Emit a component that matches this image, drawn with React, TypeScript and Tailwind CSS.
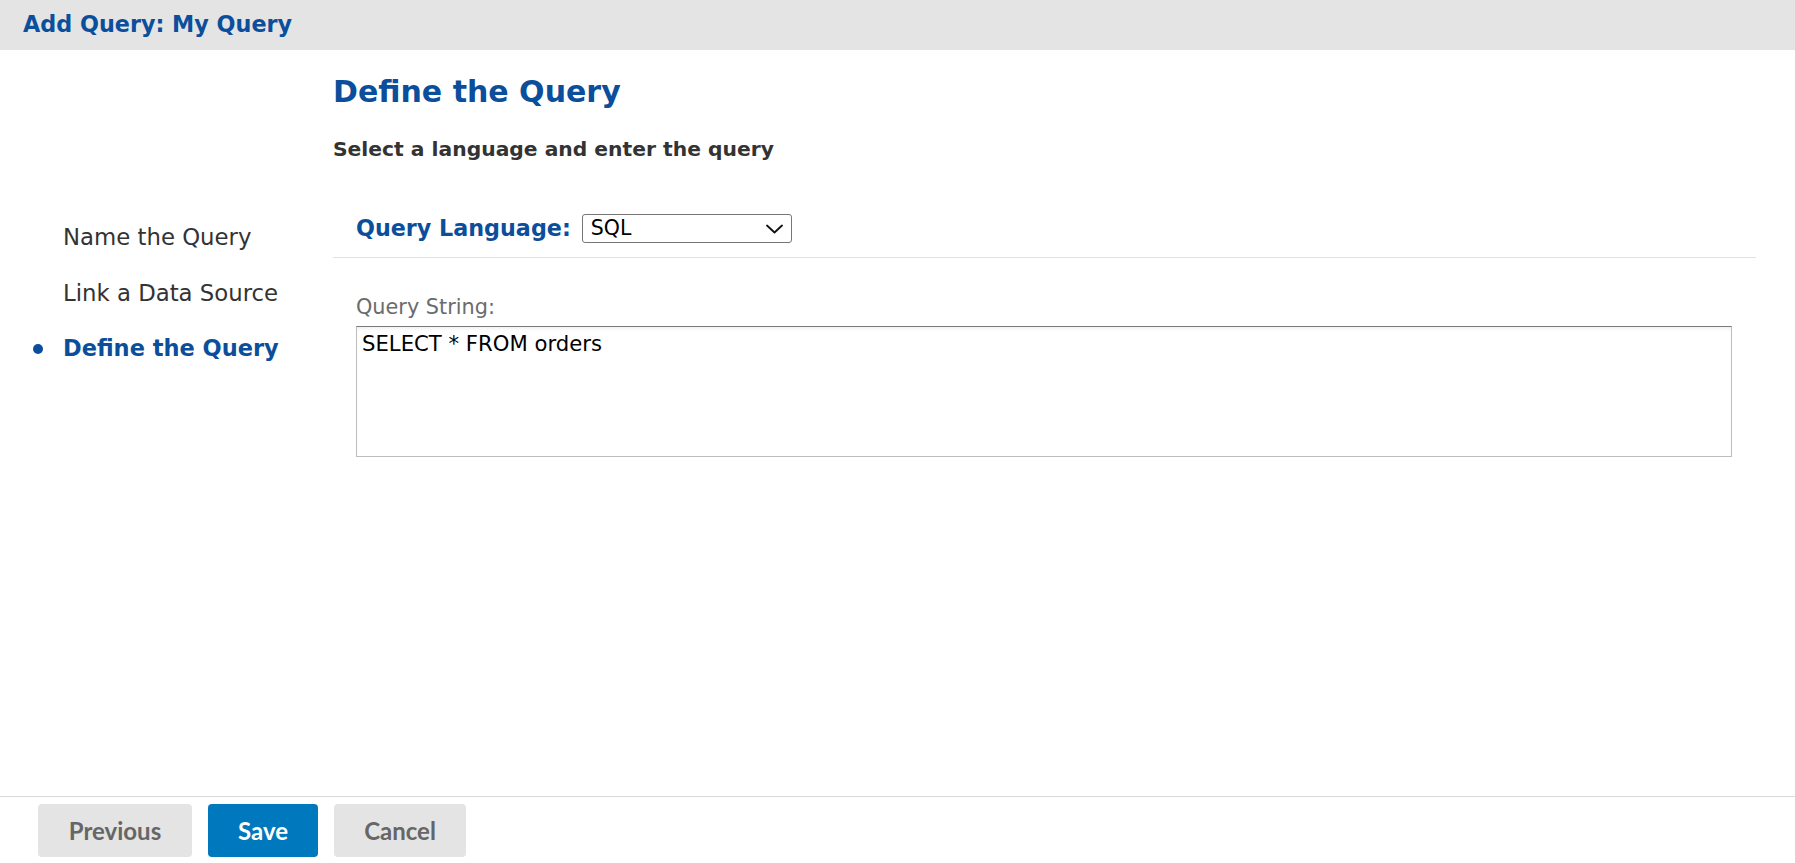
/* ------------------------------------------------------------------ */
/*  Constants                                                          */
/* ------------------------------------------------------------------ */
const BLUE = 'text-[#0b4f9c]'

const STEPS = [
  { label: 'Name the Query', active: false },
  { label: 'Link a Data Source', active: false },
  { label: 'Define the Query', active: true },
]

/* ------------------------------------------------------------------ */
/*  Wizard step list                                                   */
/* ------------------------------------------------------------------ */
function StepNav() {
  return (
    <aside className="w-[333px] shrink-0 pt-[159px]">
      <ul className="flex flex-col">
        {STEPS.map((s) => (
          <li key={s.label} className="relative flex h-[56px] items-center pl-[63px]">
            {s.active && (
              <span className="absolute left-[33px] top-1/2 h-[10px] w-[10px] -translate-y-1/2 rounded-full bg-[#0b4f9c]" />
            )}
            <span
              className={
                s.active
                  ? `text-[22.5px] font-bold ${BLUE}`
                  : 'text-[22.8px] text-[#333333]'
              }
            >
              {s.label}
            </span>
          </li>
        ))}
      </ul>
    </aside>
  )
}

/* ------------------------------------------------------------------ */
/*  Footer buttons                                                     */
/* ------------------------------------------------------------------ */
function Footer() {
  const btn =
    "flex h-[53px] items-center justify-center rounded-[4px] text-[24px] font-bold font-['Lato',sans-serif]"
  return (
    <footer className="flex h-[67px] shrink-0 gap-[16px] border-t border-[#d9d9d9] pl-[38px] pt-[7px]">
      <button className={`${btn} w-[154px] bg-[#e4e4e4] text-[#666666]`}>Previous</button>
      <button className={`${btn} w-[110px] bg-[#0078be] text-white`}>Save</button>
      <button className={`${btn} w-[132px] bg-[#e4e4e4] text-[#666666]`}>Cancel</button>
    </footer>
  )
}

/* ------------------------------------------------------------------ */
/*  Main page                                                          */
/* ------------------------------------------------------------------ */
export default function App() {
  return (
    <div className="flex h-screen flex-col overflow-hidden bg-white font-['DejaVu_Sans',sans-serif]">
      {/* Header */}
      <header className="flex h-[50px] shrink-0 items-center bg-[#e4e4e4] pl-[23px]">
        <h1 className={`text-[22.3px] font-bold ${BLUE}`}>Add Query: My Query</h1>
      </header>

      <div className="flex flex-1">
        <StepNav />

        <section className="flex-1 pr-[39px] pt-[24px]">
          <h2 className={`text-[30px] leading-[36px] font-bold ${BLUE}`}>Define the Query</h2>
          <p className="mt-[27px] text-[20.3px] leading-[24px] font-bold text-[#333333]">
            Select a language and enter the query
          </p>

          {/* Language picker */}
          <div className="mt-[51px] flex items-center gap-[11px] border-b border-[#e2e2e2] pb-[12px] pl-[23px]">
            <label className={`text-[22.25px] font-bold ${BLUE}`}>Query Language:</label>
            <div className="flex h-[29px] w-[210px] items-center justify-between rounded-[3px] border border-[#767676] pl-[8px] pr-[8px] text-[20.5px] text-black">
              <span>SQL</span>
              <svg width="17" height="10" viewBox="0 0 17 10" fill="none" className="mt-[1px]">
                <polyline
                  points="1,1.5 8.5,8.5 16,1.5"
                  stroke="#111111"
                  strokeWidth="1.8"
                  strokeLinecap="round"
                  strokeLinejoin="round"
                />
              </svg>
            </div>
          </div>

          {/* Query string */}
          <div className="pl-[23px] pr-[24px]">
            <div className="mt-[37px] text-[20.8px] leading-[24px] text-[#6b6b6b]">Query String:</div>
            <textarea
              readOnly
              defaultValue="SELECT * FROM orders"
              className="mt-[7px] block h-[131px] w-full resize-none border border-[#bdbdbd] border-t-[#7a7a7a] px-[5px] py-[5px] text-[21.2px] leading-[24px] text-black shadow-[inset_0_3px_4px_-2px_rgba(0,0,0,0.08)] outline-none font-['DejaVu_Sans',sans-serif]"
            />
          </div>
        </section>
      </div>

      <Footer />
    </div>
  )
}
